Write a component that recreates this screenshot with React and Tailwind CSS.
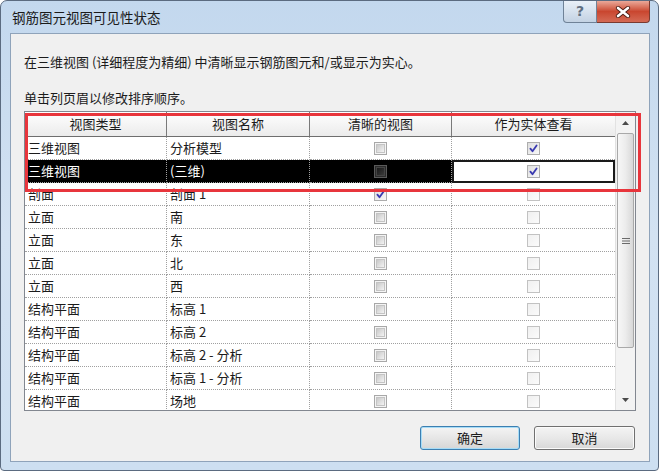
import React from "react";

const FONT = { fontFamily: '"Noto Sans CJK SC", "Noto Sans", sans-serif' };

const rows = [
  ["三维视图", "分析模型", "off", "on"],
  ["三维视图", "(三维)", "sel", "on", true],
  ["剖面", "剖面 1", "on", "light"],
  ["立面", "南", "off", "light"],
  ["立面", "东", "off", "light"],
  ["立面", "北", "off", "light"],
  ["立面", "西", "off", "light"],
  ["结构平面", "标高 1", "off", "light"],
  ["结构平面", "标高 2", "off", "light"],
  ["结构平面", "标高 2 - 分析", "off", "light"],
  ["结构平面", "标高 1 - 分析", "off", "light"],
  ["结构平面", "场地", "off", "light"],
];

function Check() {
  return (
    <svg width="13" height="13" viewBox="0 0 13 13" className="absolute left-[-1px] top-[-1px]">
      <path d="M3.4 6.6 L5.5 9.2 L9.6 3.4" fill="none" stroke="#3a3ab0" strokeWidth="1.8" strokeLinecap="round" strokeLinejoin="round" />
    </svg>
  );
}

function Box({ kind }) {
  if (kind === "off") {
    return (
      <div className="relative w-[13px] h-[13px] border border-[#a8a8a8] bg-[#f4f4f4] flex items-center justify-center">
        <div className="w-[9px] h-[9px] border border-[#c4c4c4] bg-gradient-to-br from-[#c9c9c9] to-[#f3f3f3]" />
      </div>
    );
  }
  if (kind === "sel") {
    return (
      <div className="relative w-[13px] h-[13px] border border-[#5a5a5a] bg-[#2a2a2a] flex items-center justify-center">
        <div className="w-[9px] h-[9px] border border-[#444] bg-gradient-to-br from-[#1a1a1a] to-[#3a3a3a]" />
      </div>
    );
  }
  if (kind === "on") {
    return (
      <div className="relative w-[13px] h-[13px] border border-[#adadad] bg-gradient-to-br from-[#dedede] to-[#f8f8f8]">
        <Check />
      </div>
    );
  }
  return <div className="w-[13px] h-[13px] border border-[#c2c2c2] bg-gradient-to-br from-[#f0f0f0] to-[#fbfbfb]" />;
}

export default function App() {
  return (
    <div className="w-[660px] h-[474px] bg-white text-[#1b1b1b]" style={FONT}>
      <div className="relative w-[659px] h-[471px] rounded-t-[7px] rounded-b-[4px] border border-[#5b6b80] bg-gradient-to-b from-[#c3d8ee] via-[#d3e2f2] to-[#cddff1] flex flex-col">
        {/* title bar */}
        <div className="h-[32px] flex items-start justify-between pl-[11px] pr-[8px]">
          <div className="mt-[7px] text-[13.5px] leading-[18px] text-[#1a1a1a]">钢筋图元视图可见性状态</div>
          <div className="flex">
            <div className="w-[34px] h-[22px] border border-t-0 border-[#6f8297] rounded-bl-[4px] bg-gradient-to-b from-[#e9f0f8] to-[#c3d2e3] flex items-center justify-center text-[14px] font-bold text-[#5f6e80]" style={{ fontFamily: '"DejaVu Sans", sans-serif' }}>
              ?
            </div>
            <div className="w-[53px] h-[22px] border border-t-0 border-l-0 border-[#7a3a30] rounded-br-[4px] bg-gradient-to-b from-[#e9a899] via-[#c9462f] to-[#d46a55] flex items-center justify-center">
              <svg width="16" height="12" viewBox="0 0 16 12">
                <path d="M3 2 L13 10 M13 2 L3 10" stroke="#4a1a12" strokeWidth="4.2" strokeLinecap="round" />
                <path d="M3 2 L13 10 M13 2 L3 10" stroke="#ffffff" strokeWidth="2.6" strokeLinecap="round" />
              </svg>
            </div>
          </div>
        </div>

        {/* content */}
        <div className="flex-1 ml-[9px] mr-[8px] mb-[8px] border border-[#8fa3ba] bg-[#f0f0f0] flex flex-col pl-[13px]">
          <div className="mt-[19px] text-[13px] leading-[18px]">在三维视图 (详细程度为精细) 中清晰显示钢筋图元和/或显示为实心。</div>
          <div className="mt-[18px] text-[13px] leading-[18px]">单击列页眉以修改排序顺序。</div>

          {/* table */}
          <div className="mt-[4px] w-[612px] h-[300px] border border-[#828790] bg-white flex">
            <div className="w-[590px] h-full overflow-hidden flex flex-col">
              <div className="h-[25px] shrink-0 grid grid-cols-[142px_143px_142px_163px] bg-gradient-to-b from-[#ffffff] to-[#ebebeb] border-b border-[#6e6e6e] text-[13px]">
                <div className="flex items-center justify-center border-r border-[#7a7a7a]">视图类型</div>
                <div className="flex items-center justify-center border-r border-[#7a7a7a]">视图名称</div>
                <div className="flex items-center justify-center border-r border-[#7a7a7a]">清晰的视图</div>
                <div className="flex items-center justify-center">作为实体查看</div>
              </div>
              {rows.map((r, i) => {
                const sel = r[4];
                return (
                  <div key={i} className="h-[23px] shrink-0 grid grid-cols-[142px_143px_142px_163px] text-[13px]">
                    <div className={`flex items-center pl-[3px] border-r border-b border-dotted border-[#a0a0a0] ${sel ? "bg-black text-white" : ""}`}>{r[0]}</div>
                    <div className={`flex items-center pl-[3px] border-r border-b border-dotted border-[#a0a0a0] ${sel ? "bg-black text-white" : ""}`}>{r[1]}</div>
                    <div className={`flex items-center justify-center border-r border-b border-dotted border-[#a0a0a0] ${sel ? "bg-black" : ""}`}>
                      <Box kind={r[2]} />
                    </div>
                    <div className={`flex items-center justify-center ${sel ? "border-2 border-solid border-[#1a1a1a]" : "border-b border-dotted border-[#a0a0a0]"}`}>
                      <Box kind={r[3]} />
                    </div>
                  </div>
                );
              })}
            </div>
            {/* scrollbar */}
            <div className="w-[20px] h-full border-l border-[#e2e2e2] bg-[#f3f3f3] flex flex-col items-center">
              <div className="h-[21px] w-full flex items-center justify-center">
                <svg width="7" height="4" viewBox="0 0 7 4"><path d="M0 4 L3.5 0 L7 4 Z" fill="#4a4a4a" /></svg>
              </div>
              <div className="w-[17px] h-[215px] rounded-[2px] border border-[#a9a9a9] bg-gradient-to-r from-[#f7f7f7] via-[#ececec] to-[#d8d8d8] flex items-center justify-center">
                <svg width="8" height="8" viewBox="0 0 8 8">
                  <path d="M0 1.5 H8 M0 4 H8 M0 6.5 H8" stroke="#6a6a6a" strokeWidth="1" />
                </svg>
              </div>
              <div className="flex-1" />
              <div className="h-[21px] w-full flex items-center justify-center">
                <svg width="7" height="4" viewBox="0 0 7 4"><path d="M0 0 L3.5 4 L7 0 Z" fill="#4a4a4a" /></svg>
              </div>
            </div>
          </div>

          {/* buttons */}
          <div className="mt-[15px] flex justify-end gap-[14px] pr-[14px]">
            <div className="w-[100px] h-[24px] rounded-[3px] border border-[#3c7fb1] shadow-[inset_0_0_0_1px_#a6dcf7] bg-gradient-to-b from-[#f4f4f4] via-[#e6e6e6] to-[#d6d6d6] flex items-center justify-center text-[13px]">
              确定
            </div>
            <div className="w-[101px] h-[24px] rounded-[3px] border border-[#707070] shadow-[inset_0_0_0_1px_#fbfbfb] bg-gradient-to-b from-[#f4f4f4] via-[#e8e8e8] to-[#d8d8d8] flex items-center justify-center text-[13px]">
              取消
            </div>
          </div>
        </div>

        {/* red annotation box */}
        <div className="absolute left-[24px] top-[112px] w-[616px] h-[79px] border-[3px] border-[#e8353c] pointer-events-none" />
      </div>
    </div>
  );
}
